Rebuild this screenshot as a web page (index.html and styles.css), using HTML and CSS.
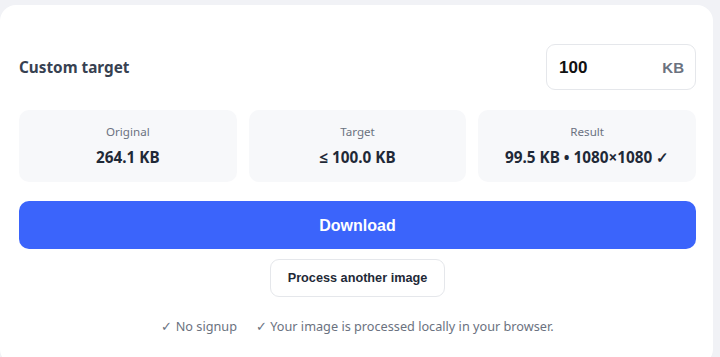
FILE: index.html
```html
<!DOCTYPE html>
<html>
<head>
<meta charset="utf-8">
<link rel="stylesheet" href="styles.css">
</head>
<body>
<div class="card">
  <div class="target-row">
    <div class="target-label">Custom target</div>
    <div class="target-input">
      <span class="target-value">100</span>
      <span class="target-unit">KB</span>
    </div>
  </div>
  <div class="stats">
    <div class="stat">
      <div class="stat-label">Original</div>
      <div class="stat-value">264.1 KB</div>
    </div>
    <div class="stat">
      <div class="stat-label">Target</div>
      <div class="stat-value">≤ 100.0 KB</div>
    </div>
    <div class="stat">
      <div class="stat-label">Result</div>
      <div class="stat-value">99.5 KB • 1080×1080 ✓</div>
    </div>
  </div>
  <button class="download">Download</button>
  <div class="secondary-row">
    <button class="secondary">Process another image</button>
  </div>
  <div class="notes">
    <span>✓ No signup</span>
    <span>✓ Your image is processed locally in your browser.</span>
  </div>
</div>
</body>
</html>
```
FILE: styles.css
```css
html, body {
  margin: 0;
  padding: 0;
}
body {
  background: #f1f2f6;
  padding-top: 5px;
  font-family: "Noto Sans", "Open Sans", sans-serif;
  overflow: hidden;
}
.card {
  width: 713px;
  height: 360px;
  box-sizing: border-box;
  background: #ffffff;
  border-radius: 16px;
  padding: 39px 17px 0 19px;
}
.target-row {
  display: flex;
  align-items: center;
  justify-content: space-between;
  height: 46px;
}
.target-label {
  font-size: 15.3px;
  font-weight: 700;
  color: #374151;
}
.target-input {
  width: 150px;
  height: 46px;
  box-sizing: border-box;
  border: 1px solid #e5e7eb;
  border-radius: 9px;
  display: flex;
  align-items: center;
  justify-content: space-between;
  padding: 0 11px 0 12px;
  font-family: "Liberation Sans", Arial, sans-serif;
  font-weight: 700;
  font-size: 16px;
}
.target-value {
  color: #111111;
  font-size: 17px;
  padding-top: 1px;
}
.target-unit {
  color: #6b7280;
  font-size: 15px;
}
.stats {
  margin-top: 20px;
  display: grid;
  grid-template-columns: 1fr 1fr 1fr;
  gap: 12px;
}
.stat {
  height: 72px;
  box-sizing: border-box;
  background: #f7f8fa;
  border-radius: 10px;
  display: flex;
  flex-direction: column;
  align-items: center;
  justify-content: center;
  gap: 6px;
  padding-bottom: 2px;
}
.stat-label {
  font-size: 11.6px;
  color: #6b7280;
  line-height: 18px;
}
.stat-value {
  font-size: 15.3px;
  font-weight: 700;
  color: #1f2937;
  line-height: 20px;
}
.download {
  display: block;
  width: 100%;
  height: 48px;
  margin-top: 19px;
  border: none;
  border-radius: 10px;
  background: #3b64fb;
  color: #ffffff;
  font-family: "Liberation Sans", Arial, sans-serif;
  font-weight: 700;
  font-size: 16px;
  padding-top: 2px;
}
.secondary-row {
  display: flex;
  justify-content: center;
  margin-top: 10px;
}
.secondary {
  height: 38px;
  width: 175px;
  box-sizing: border-box;
  border: 1px solid #e5e7eb;
  border-radius: 9px;
  background: #ffffff;
  color: #1f2937;
  font-family: "Liberation Sans", Arial, sans-serif;
  font-weight: 700;
  font-size: 12.7px;
}
.notes {
  margin-top: 19px;
  display: flex;
  justify-content: center;
  gap: 19px;
  font-size: 12.7px;
  line-height: 20px;
  color: #6b7280;
}
```
